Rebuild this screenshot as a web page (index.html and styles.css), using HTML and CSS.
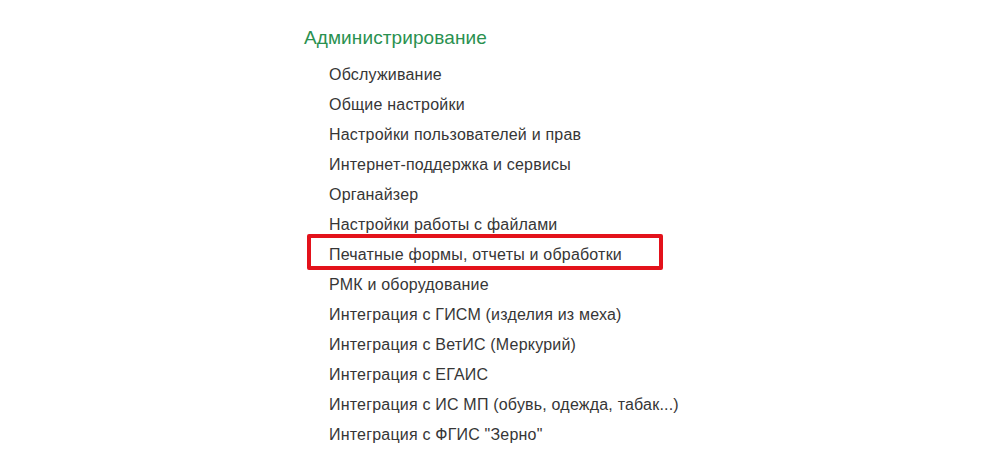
FILE: index.html
```html
<!DOCTYPE html>
<html lang="ru">
<head>
    <meta charset="UTF-8">
    <meta name="viewport" content="width=device-width, initial-scale=1.0">
    <title>Администрирование</title>
    <link rel="stylesheet" href="styles.css">
</head>
<body>
    <div class="section">
        <h2 class="section-title">Администрирование</h2>
        <ul class="menu">
            <li>Обслуживание</li>
            <li>Общие настройки</li>
            <li>Настройки пользователей и прав</li>
            <li>Интернет-поддержка и сервисы</li>
            <li>Органайзер</li>
            <li>Настройки работы с файлами</li>
            <li class="marked">Печатные формы, отчеты и обработки</li>
            <li>РМК и оборудование</li>
            <li>Интеграция с ГИСМ (изделия из меха)</li>
            <li>Интеграция с ВетИС (Меркурий)</li>
            <li>Интеграция с ЕГАИС</li>
            <li>Интеграция с ИС МП (обувь, одежда, табак...)</li>
            <li>Интеграция с ФГИС "Зерно"</li>
        </ul>
    </div>
</body>
</html>
```

FILE: styles.css
```css
body {
    margin: 0;
    background-color: #fff;
    font-family: "Liberation Sans", Arial, sans-serif;
}
.section {
    padding: 26px 0 0 304px;
}
.section-title {
    margin: 0 0 10px 0;
    font-size: 19px;
    font-weight: normal;
    line-height: 24px;
    letter-spacing: 0.1px;
    color: #2a9150;
}
.menu {
    list-style: none;
    margin: 0;
    padding: 0 0 0 25px;
}
.menu li {
    font-size: 16px;
    line-height: 30px;
    letter-spacing: 0.2px;
    color: #363636;
}
.menu li.marked {
    position: relative;
}
.menu li.marked::after {
    content: "";
    position: absolute;
    left: -22px;
    top: -6px;
    width: 356px;
    height: 36px;
    box-sizing: border-box;
    border: 4px solid #e3121b;
    border-radius: 2px;
}
```
